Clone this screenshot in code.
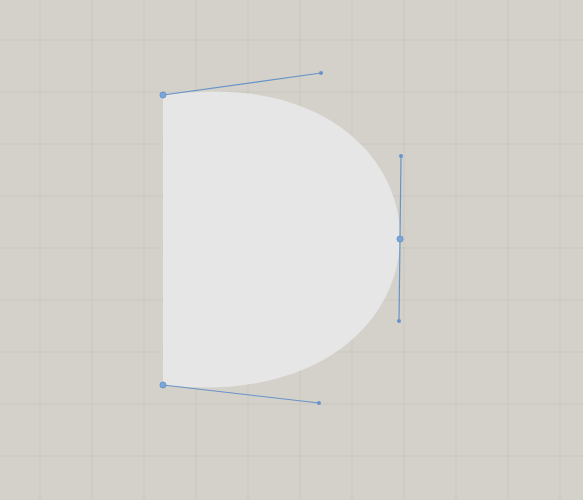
const LINE = '#6794c8'

export default function App() {
  return (
    <div className="h-[500px] w-full overflow-hidden bg-[#d4d1ca]">
      <svg width="583" height="500" viewBox="0 0 583 500" className="block">
        <defs>
          <pattern id="grid" x="39.5" y="39.5" width="52" height="52" patternUnits="userSpaceOnUse">
            <path d="M0 0H52M0 0V52" stroke="#bfbcb5" strokeWidth="1" fill="none" />
          </pattern>
        </defs>
        <rect width="583" height="500" fill="url(#grid)" />

        {/* shape */}
        <path
          d="M163 95 C321 73 401 156 400 239 C399 321 319 403 163 385 Z"
          fill="#e6e6e6"
        />

        {/* handles */}
        <g stroke={LINE} strokeWidth="1.2" fill="none">
          <line x1="163" y1="95" x2="321" y2="73" />
          <line x1="401" y1="156" x2="399" y2="321" />
          <line x1="163" y1="385" x2="319" y2="403" />
        </g>
        <g fill={LINE}>
          <circle cx="321" cy="73" r="2" />
          <circle cx="401" cy="156" r="2" />
          <circle cx="399" cy="321" r="2" />
          <circle cx="319" cy="403" r="2" />
        </g>
        <g fill="#7aa8dc" stroke={LINE} strokeWidth="1">
          <circle cx="163" cy="95" r="3" />
          <circle cx="400" cy="239" r="3" />
          <circle cx="163" cy="385" r="3" />
        </g>
      </svg>
    </div>
  )
}
